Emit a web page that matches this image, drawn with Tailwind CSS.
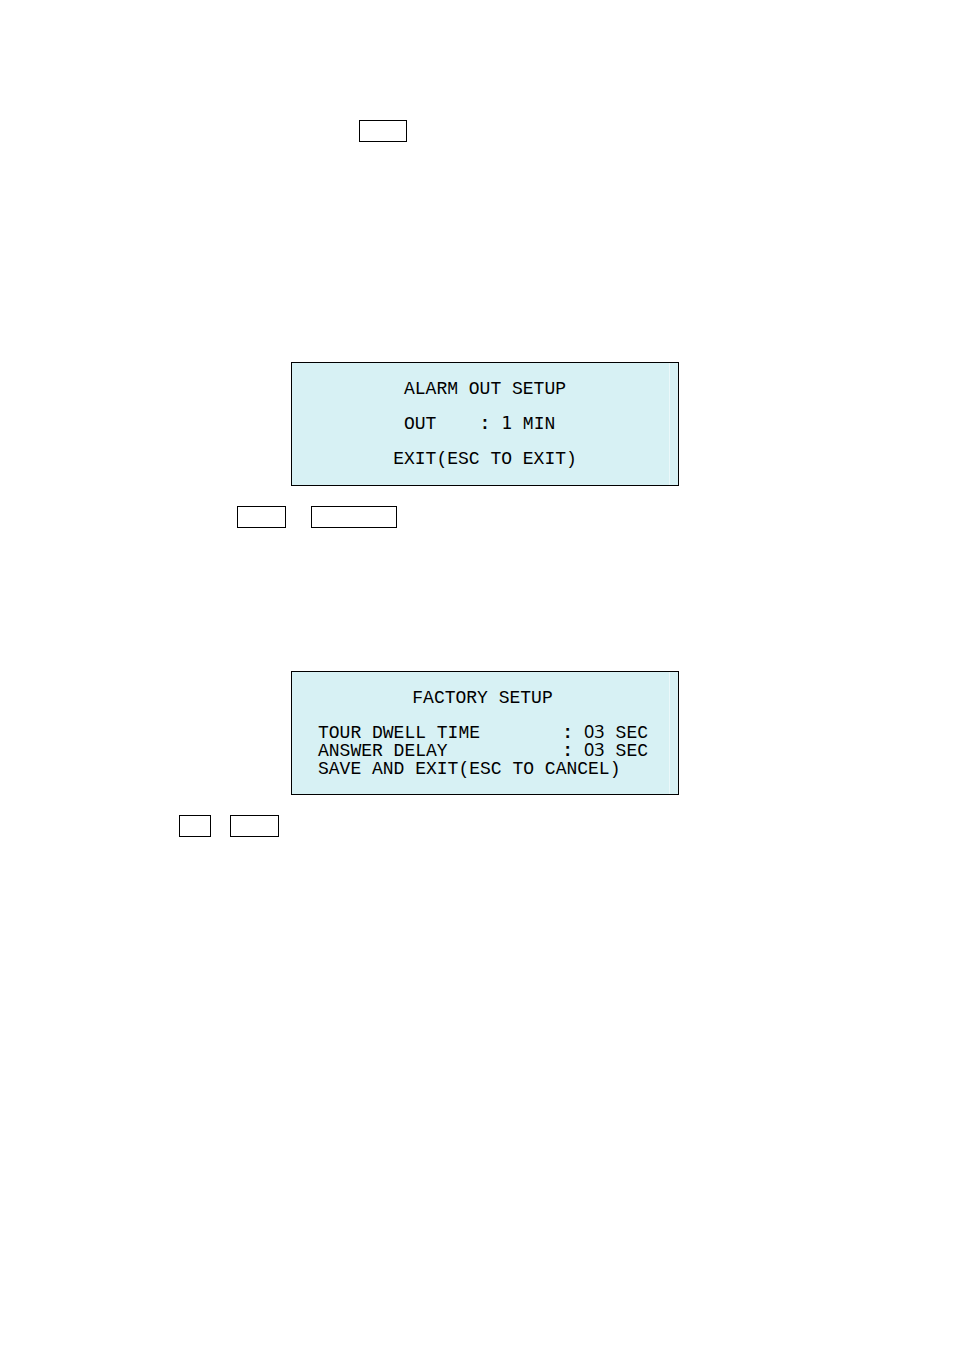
<!DOCTYPE html>
<html lang="en">
  <head>
    <meta charset="UTF-8" />
    <meta name="viewport" content="width=device-width, initial-scale=1.0" />
    <title>Alarm Out / Factory Setup</title>
    <script src="https://cdn.jsdelivr.net/npm/@tailwindcss/browser@4"></script>
  </head>
  <body class="bg-white text-black">
    <main class="min-h-screen pt-[120px] pb-20 pl-[179px] pr-[163px]">
      <!-- key outlines -->
      <div class="flex pl-[180px]">
        <span class="h-[22px] w-12 border border-black"></span>
      </div>

      <!-- alarm out screen -->
      <section
        class="mt-[220px] mx-auto w-full max-w-[388px] border border-black bg-[#d7f1f4] font-['Liberation_Mono',monospace] text-[18px]"
      >
        <div class="mr-2 border-r border-white/50 pt-[9px] pb-2 pl-[9px] leading-[35px]">
          <h1 class="text-center">ALARM OUT SETUP</h1>
          <p class="flex justify-center whitespace-pre"><span>OUT    <b>:</b> <span class="font-['DejaVu_Sans_Mono',monospace] leading-none">1</span> MIN </span></p>
          <p class="text-center">EXIT(ESC TO EXIT)</p>
        </div>
      </section>

      <div class="mt-5 flex gap-[25px] pl-[58px]">
        <span class="h-[22px] w-[49px] border border-black"></span>
        <span class="h-[22px] w-[86px] border border-black"></span>
      </div>

      <!-- factory screen -->
      <section
        class="mt-[143px] mx-auto w-full max-w-[388px] border border-black bg-[#d7f1f4] font-['Liberation_Mono',monospace] text-[18px]"
      >
        <div class="mr-2 border-r border-white/50 pt-[9px] pb-4 leading-[18px]">
          <h2 class="pl-1 text-center leading-[35px]">FACTORY SETUP</h2>
          <div class="mt-2 pl-[26px] pr-[21px]">
            <p class="flex h-[18px] justify-between">
              <span>TOUR DWELL TIME</span>
              <span class="flex items-baseline gap-[11px]"><b>:</b><span class="font-['Noto_Sans',sans-serif] leading-[14px]">03</span><span>SEC</span></span>
            </p>
            <p class="flex h-[18px] justify-between">
              <span>ANSWER DELAY</span>
              <span class="flex items-baseline gap-[11px]"><b>:</b><span class="font-['Noto_Sans',sans-serif] leading-[14px]">03</span><span>SEC</span></span>
            </p>
            <p>SAVE AND EXIT(ESC TO CANCEL)</p>
          </div>
        </div>
      </section>

      <div class="mt-5 flex gap-[19px]">
        <span class="h-[22px] w-8 border border-black"></span>
        <span class="h-[22px] w-[49px] border border-black"></span>
      </div>
    </main>
  </body>
</html>
